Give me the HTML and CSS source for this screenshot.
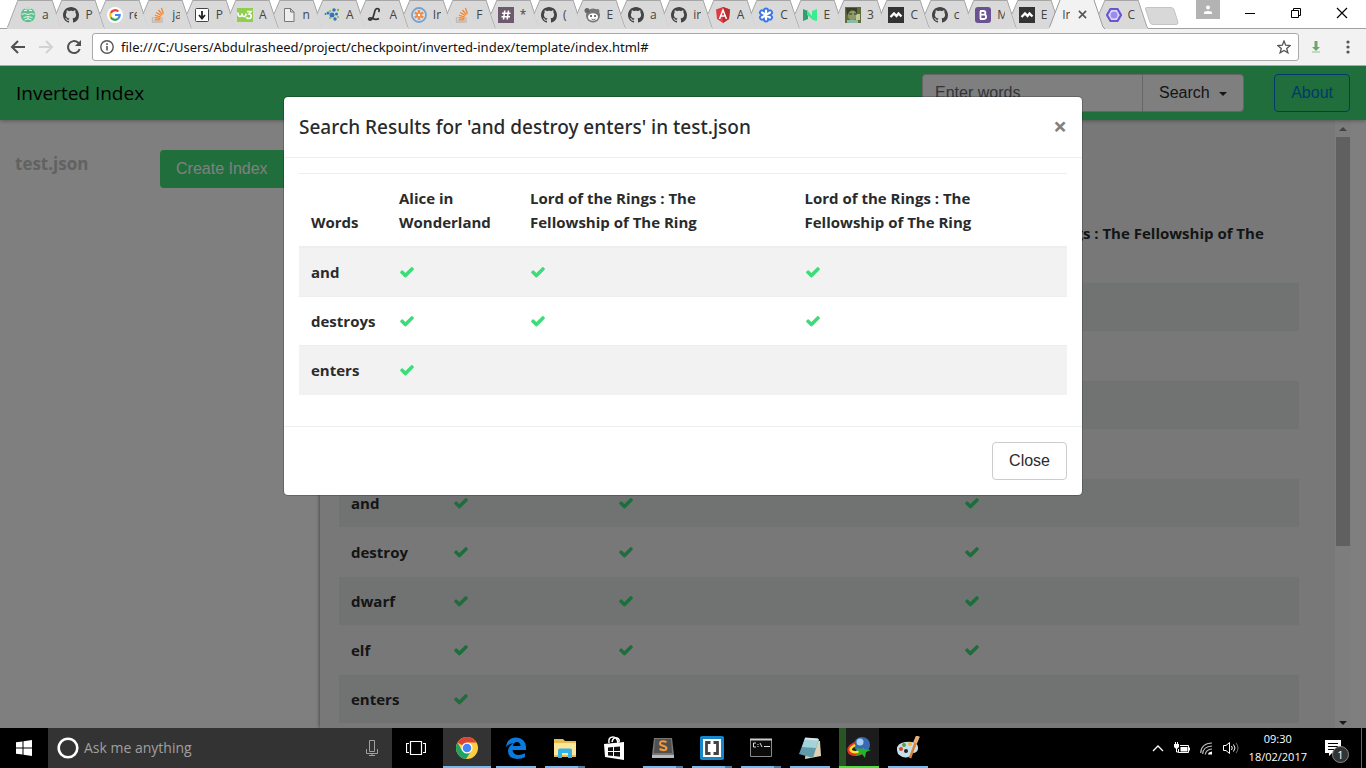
FILE: index.html
```html
<!DOCTYPE html>
<html lang="en">
<head>
<meta charset="utf-8">
<title>Inverted Index</title>
<link rel="stylesheet" href="styles.css">
</head>
<body>
<svg class="defs" aria-hidden="true">
  <symbol id="shape" viewBox="0 0 56 29"><path d="M12 0 6 14l5 15h44L45 0z" fill="#d9d9d9"/><path d="M12 0 6 14M45 0l9 27 2 2M12 .5h33" fill="none" stroke="#a6a6a6"/></symbol>
  <symbol id="shape-first" viewBox="0 0 56 29"><path d="M11 0 0 29h55L45 0z" fill="#d9d9d9"/><path d="M-1 29 1 26 11 0M45 0l9 27 2 2M11 .5h34" fill="none" stroke="#a6a6a6"/></symbol>
  <symbol id="shape-active" viewBox="0 0 56 29"><path d="M-1 29 1 26 11 0h34l9 27 2 2z" fill="#f2f2f2"/><path d="M-1 29 1 26 11 0M45 0l9 27 2 2" fill="none" stroke="#999"/></symbol>
  <symbol id="github" viewBox="0 0 16 16"><path fill="#444" d="M8 0C3.58 0 0 3.58 0 8c0 3.54 2.29 6.53 5.47 7.59.4.07.55-.17.55-.38 0-.19-.01-.82-.01-1.49-2.01.37-2.53-.49-2.69-.94-.09-.23-.48-.94-.82-1.13-.28-.15-.68-.52-.01-.53.63-.01 1.08.58 1.23.82.72 1.21 1.87.87 2.33.66.07-.52.28-.87.51-1.07-1.78-.2-3.64-.89-3.64-3.95 0-.87.31-1.59.82-2.15-.08-.2-.36-1.02.08-2.12 0 0 .67-.21 2.2.82.64-.18 1.32-.27 2-.27s1.36.09 2 .27c1.53-1.04 2.2-.82 2.2-.82.44 1.1.16 1.92.08 2.12.51.56.82 1.27.82 2.15 0 3.07-1.87 3.75-3.65 3.95.29.25.54.73.54 1.48 0 1.07-.01 1.93-.01 2.2 0 .21.15.46.55.38A8.013 8.013 0 0016 8c0-4.42-3.58-8-8-8z"/></symbol>
  <symbol id="stack" viewBox="0 0 16 16"><path d="M2.500 10v5h9.500v-5" fill="none" stroke="#bbb" stroke-width="1.300"/><path d="M4.500 12.800h6M4.500 10.600l6 .8M5 8.200l5.800 1.800M6.200 5.400l5.200 3.200M8.400 3l4 4.600M11.400 1l2 5.800" stroke="#f48024" stroke-width="1.200"/></symbol>
  <symbol id="peaks" viewBox="0 0 16 16"><path fill="#333" d="M0 0h16v16H0z"/><path d="m2.500 10 3.500-3.500 2.500 2.500 2-2.500 3 3" fill="none" stroke="#fff" stroke-width="2.400"/></symbol>
  <symbol id="check" viewBox="0 0 1792 1792"><path fill="#3ddc78" d="M1671 566q0 40-28 68l-724 724-136 136q-28 28-68 28t-68-28l-136-136-362-362q-28-28-28-68t28-68l136-136q28-28 68-28t68 28l294 295 656-657q28-28 68-28t68 28l136 136q28 28 28 68z"/></symbol>
</svg>

<header class="chrome">
  <div class="strip">
    <div class="tabs">
      <button class="tab"><svg class="shape"><use href="#shape-first"/></svg><svg class="fav" viewBox="0 0 16 16"><circle cx="8" cy="8" r="7.300" fill="#5fc08d"/><path d="M4 3.500h3M9 3.500h3M1.500 7.500q3-2 6.500 0 3.500-2 6.500 0M5 1.800h6M3.500 10.500q4.500-2 9 0M4.500 13q3.500-2.500 7 0M8 9.500v3" fill="none" stroke="#e3f3ea"/></svg><span>a</span></button>
      <button class="tab"><svg class="shape"><use href="#shape"/></svg><svg class="fav"><use href="#github"/></svg><span>P</span></button>
      <button class="tab"><svg class="shape"><use href="#shape"/></svg><svg class="fav" viewBox="0 0 16 16"><circle cx="8" cy="8" r="8" fill="#fff"/><g fill="none" stroke-width="2.200"><path d="M11.300 4.500A4.700 4.700 0 0 0 3.800 6" stroke="#ea4335"/><path d="M3.800 6a4.700 4.700 0 0 0 0 4.200" stroke="#fbbc05"/><path d="M3.800 10.200a4.700 4.700 0 0 0 7.300 1.400" stroke="#34a853"/><path d="M11.100 11.600A4.700 4.700 0 0 0 12.700 8H8" stroke="#4285f4"/></g></svg><span>re</span></button>
      <button class="tab"><svg class="shape"><use href="#shape"/></svg><svg class="fav"><use href="#stack"/></svg><span>ja</span></button>
      <button class="tab"><svg class="shape"><use href="#shape"/></svg><svg class="fav" viewBox="0 0 16 16"><rect x="1.500" y="1.500" width="13" height="13" rx="1" fill="#fff" stroke="#444"/><path d="M8 4v7M5 8l3 3.500L11 8" fill="none" stroke="#222" stroke-width="1.800"/></svg><span>P</span></button>
      <button class="tab"><svg class="shape"><use href="#shape"/></svg><svg class="fav" viewBox="0 0 16 16"><path fill="#8fce4f" d="M0 1h16v14H0z"/><path d="M1 5.500q0 4 2 4t2-3q0 3 2 3t2-3M10 4.500h4L12 7c3 0 3 4.500 0 4.500-1.500 0-2.500-.8-2.500-1.500" fill="none" stroke="#fff" stroke-width="1.600"/></svg><span>A</span></button>
      <button class="tab"><svg class="shape"><use href="#shape"/></svg><svg class="fav" viewBox="0 0 16 16"><path d="M3.500 1.500h6l3.500 3.500v9.500H3.500zM9.500 1.500V5H13" fill="#eee" stroke="#777"/></svg><span>n</span></button>
      <button class="tab"><svg class="shape"><use href="#shape"/></svg><svg class="fav" viewBox="0 0 16 16"><g fill="#3277b5"><circle cx="8" cy="8" r="2.500"/><circle cx="10" cy="3" r="1.800"/><circle cx="4" cy="6" r="1.500"/><circle cx="12.500" cy="7" r="1.500"/><circle cx="11" cy="12" r="1.700"/><circle cx="1.500" cy="7" r="1"/></g><g fill="#82b83c"><circle cx="6" cy="11" r="1"/><circle cx="14" cy="3" r="1.200"/><circle cx="6" cy="4" r="1"/><circle cx="14" cy="10" r="1"/></g></svg><span>A</span></button>
      <button class="tab"><svg class="shape"><use href="#shape"/></svg><svg class="fav" viewBox="0 0 16 16"><path d="M11.500 5c2.500-3-2-5-3.500-1.500C7 6.500 7 10 4.500 12.500c-2 1.500-4-.5-2-1.500 2.500-1 5 3.500 9.500.5" fill="none" stroke="#333" stroke-width="1.700"/></svg><span>A</span></button>
      <button class="tab"><svg class="shape"><use href="#shape"/></svg><svg class="fav" viewBox="0 0 16 16"><circle cx="8" cy="8" r="7" fill="#d7e3ec" stroke="#72a4cf" stroke-width="1.800"/><g stroke="#f08a45" stroke-width="2.400"><path d="M8 3v10M3.700 5.500l8.600 5M3.700 10.500l8.600-5"/></g><circle cx="8" cy="8" r="1.200" fill="#fff"/></svg><span>In</span></button>
      <button class="tab"><svg class="shape"><use href="#shape"/></svg><svg class="fav"><use href="#stack"/></svg><span>F</span></button>
      <button class="tab"><svg class="shape"><use href="#shape"/></svg><svg class="fav" viewBox="0 0 16 16"><path fill="#6e5a6e" d="M0 0h16v16H0z"/><path d="M6.800 3.500 5.500 12.500M10.500 3.500 9.200 12.500M4 6.200h8.500M3.500 9.800H12" stroke="#fff" stroke-width="1.600"/></svg><span>*</span></button>
      <button class="tab"><svg class="shape"><use href="#shape"/></svg><svg class="fav"><use href="#github"/></svg><span>(</span></button>
      <button class="tab"><svg class="shape"><use href="#shape"/></svg><svg class="fav" viewBox="0 0 16 16"><circle cx="9" cy="8.500" r="7" fill="#777"/><circle cx="3" cy="3.500" r="2.500" fill="#666"/><circle cx="13.500" cy="4" r="2" fill="#777"/><ellipse cx="9" cy="10" rx="5" ry="3.800" fill="#fff"/><path d="M7.500 12q2 1.500 4 0" fill="none" stroke="#666"/><circle cx="7" cy="9" r="1" fill="#444"/><circle cx="11" cy="9" r="1" fill="#444"/></svg><span>E</span></button>
      <button class="tab"><svg class="shape"><use href="#shape"/></svg><svg class="fav"><use href="#github"/></svg><span>a</span></button>
      <button class="tab"><svg class="shape"><use href="#shape"/></svg><svg class="fav"><use href="#github"/></svg><span>in</span></button>
      <button class="tab"><svg class="shape"><use href="#shape"/></svg><svg class="fav" viewBox="0 0 16 16"><path fill="#dd3b45" d="m8 0 7 2.500-1 9.500-6 4-6-4-1-9.500z"/><path fill="#b52e31" d="m8 0 7 2.500-1 9.500-6 4z"/><path d="m4.500 12 3.500-9 3.500 9M6 9h4" fill="none" stroke="#fff" stroke-width="1.500"/></svg><span>A</span></button>
      <button class="tab"><svg class="shape"><use href="#shape"/></svg><svg class="fav" viewBox="0 0 16 16"><g stroke="#3b78e7" stroke-width="6" stroke-linecap="round"><path d="M8 3.500v9M4 5.500l8 5M4 10.500l8-5"/></g><g stroke="#fff" stroke-width="2.200" stroke-linecap="round"><path d="M8 3.500v9M4 5.500l8 5M4 10.500l8-5"/></g></svg><span>C</span></button>
      <button class="tab"><svg class="shape"><use href="#shape"/></svg><svg class="fav" viewBox="0 0 16 16"><path fill="#32a06b" d="m1 2 5 2v8l-5 2z"/><path fill="#3dea93" d="m5 3 5 6V4l5-2v12l-4-1-6-5z"/></svg><span>E</span></button>
      <button class="tab"><svg class="shape"><use href="#shape"/></svg><svg class="fav" viewBox="0 0 16 16"><path fill="#5f6b3b" d="M0 0h16v16H0z"/><path fill="#373f24" d="M1 1h11v5L2 8z"/><ellipse cx="7.500" cy="8.500" rx="4.500" ry="5" fill="#8d9a67"/><path fill="#c2c890" d="M11 7h4v6h-4z"/><path d="M4 7h3M9 7h3" stroke="#333"/><path fill="#8dbaa4" d="M2 13h11v3H2z"/></svg><span>3</span></button>
      <button class="tab"><svg class="shape"><use href="#shape"/></svg><svg class="fav"><use href="#peaks"/></svg><span>C</span></button>
      <button class="tab"><svg class="shape"><use href="#shape"/></svg><svg class="fav"><use href="#github"/></svg><span>c</span></button>
      <button class="tab"><svg class="shape"><use href="#shape"/></svg><svg class="fav" viewBox="0 0 16 16"><rect width="16" height="16" rx="3" fill="#6a5192"/><path d="M5.500 4v8M5 4h3.500c2.500 0 2.500 3.700 0 3.700H5.500h3.500c2.800 0 2.800 4.300 0 4.300H5" fill="none" stroke="#fff" stroke-width="1.800"/></svg><span>M</span></button>
      <button class="tab"><svg class="shape"><use href="#shape"/></svg><svg class="fav"><use href="#peaks"/></svg><span>E</span></button>
      <button class="tab active"><svg class="shape"><use href="#shape-active"/></svg><span>In</span><svg class="tab-x" viewBox="0 0 10 10"><path d="m1 1 8 8M9 1 1 9" stroke="#555" stroke-width="1.800"/></svg></button>
      <button class="tab"><svg class="shape"><use href="#shape"/></svg><svg class="fav" viewBox="0 0 16 16"><path d="m4.500 2h7L15 8l-3.500 6h-7L1 8z" fill="#ddd9f5" stroke="#6b54d3" stroke-width="2.200"/><circle cx="8" cy="8" r="3.500" fill="#958df0"/></svg><span>C</span></button>
    </div>
    <div class="window-tools">
      <button class="new-tab" aria-label="New tab"><svg width="36" height="18" viewBox="0 0 36 18"><path d="M3 .5h24q2 0 3 2l4 13q0 2-2 2H9q-2 0-3-2L1.500 2Q1 .5 3 .5z" fill="#d8d8d8" stroke="#c4c4c4"/></svg></button>
      <button class="person" aria-label="Profile"><svg width="10" height="10" viewBox="0 0 10 10"><circle cx="5" cy="2.500" r="2" fill="#fff"/><path d="M1 9V7.500Q1 6 5 6t4 1.500V9z" fill="#fff"/></svg></button>
      <button class="win" aria-label="Minimize"><svg width="12" height="12" viewBox="0 0 12 12"><path d="M1 6.500h10" stroke="#000"/></svg></button>
      <button class="win" aria-label="Restore"><svg width="12" height="12" viewBox="0 0 12 12"><path d="M1.500 3.500h7v7h-7zM3.500 3V1.500h7v7H9" fill="none" stroke="#000"/></svg></button>
      <button class="win" aria-label="Close window"><svg width="12" height="12" viewBox="0 0 12 12"><path d="m1 1 10 10M11 1 1 11" stroke="#000" stroke-width="1.200"/></svg></button>
    </div>
  </div>
  <div class="toolbar">
    <button aria-label="Back"><svg width="16" height="16" viewBox="0 0 16 16"><path d="M15 8H2.500M8 2 2 8l6 6" fill="none" stroke="#505050" stroke-width="2"/></svg></button>
    <button aria-label="Forward"><svg width="16" height="16" viewBox="0 0 16 16"><path d="M1 8h12.500M8 2l6 6-6 6" fill="none" stroke="#d2d2d2" stroke-width="2"/></svg></button>
    <button aria-label="Reload"><svg width="16" height="16" viewBox="0 0 16 16"><path d="M13.700 10A6 6 0 1 1 12 3.600l1.500 1.500" fill="none" stroke="#505050" stroke-width="2"/><path d="M15 1v6H9z" fill="#505050"/></svg></button>
    <div class="omnibox">
      <svg width="14" height="14" viewBox="0 0 14 14"><circle cx="7" cy="7" r="6.200" fill="none" stroke="#555" stroke-width="1.400"/><path d="M7 6v4.500M7 3.300V5" stroke="#555" stroke-width="1.600"/></svg>
      <input class="url" aria-label="Address" value="file:///C:/Users/Abdulrasheed/project/checkpoint/inverted-index/template/index.html#">
      <button aria-label="Bookmark"><svg width="14" height="14" viewBox="0 0 14 14"><path d="m7 1 1.700 4.200 4.500.3-3.500 2.900 1.200 4.400L7 10.400l-3.900 2.400 1.200-4.400L.8 5.500l4.500-.3z" fill="none" stroke="#555" stroke-width="1.300"/></svg></button>
    </div>
    <button class="download" aria-label="Download"><svg width="10" height="14" viewBox="0 0 10 14"><path d="M3.500 1h3v6H9L5 11 1 7h2.500z" fill="#6da56d"/><path d="M1 12h8" stroke="#94bd94"/></svg></button>
    <button class="menu" aria-label="Menu"><svg width="4" height="14" viewBox="0 0 4 14"><g fill="#555"><circle cx="2" cy="2" r="1.600"/><circle cx="2" cy="7" r="1.600"/><circle cx="2" cy="12" r="1.600"/></g></svg></button>
  </div>
</header>

<div class="page">
  <nav class="navbar">
    <a class="brand" href="#">Inverted Index</a>
    <div class="search-group">
      <input class="words" aria-label="Enter words" placeholder="Enter words">
      <button class="search-btn">Search <i class="caret"></i></button>
    </div>
    <a class="about" href="#">About</a>
  </nav>
  <div class="columns">
    <aside class="sidebar">
      <strong>test.json</strong>
      <button class="create">Create Index</button>
    </aside>
    <main class="results">
      <table class="grid index-grid">
        <colgroup><col class="w1"><col class="w2"><col class="w3"><col></colgroup>
        <thead><tr><th></th><th></th><th></th><th>Lord of the Rings : The Fellowship of The Ring</th></tr></thead>
        <tbody>
          <tr><th></th><td></td><td></td><td></td></tr>
          <tr><th></th><td></td><td></td><td></td></tr>
          <tr><th></th><td></td><td></td><td></td></tr>
          <tr><th></th><td></td><td></td><td></td></tr>
          <tr><th>and</th><td><svg class="check"><use href="#check"/></svg></td><td><svg class="check"><use href="#check"/></svg></td><td><svg class="check"><use href="#check"/></svg></td></tr>
          <tr><th>destroy</th><td><svg class="check"><use href="#check"/></svg></td><td><svg class="check"><use href="#check"/></svg></td><td><svg class="check"><use href="#check"/></svg></td></tr>
          <tr><th>dwarf</th><td><svg class="check"><use href="#check"/></svg></td><td><svg class="check"><use href="#check"/></svg></td><td><svg class="check"><use href="#check"/></svg></td></tr>
          <tr><th>elf</th><td><svg class="check"><use href="#check"/></svg></td><td><svg class="check"><use href="#check"/></svg></td><td><svg class="check"><use href="#check"/></svg></td></tr>
          <tr><th>enters</th><td><svg class="check"><use href="#check"/></svg></td><td></td><td></td></tr>
        </tbody>
      </table>
    </main>
    <div class="scrollbar" aria-hidden="true">
      <i class="up"></i><div class="thumb"></div><div class="rest"></div><i class="down"></i>
    </div>
  </div>

  <div class="backdrop">
    <section class="modal" role="dialog" aria-labelledby="modal-title">
      <header class="modal-head"><h5 id="modal-title">Search Results for 'and destroy enters' in test.json</h5><button class="close" aria-label="Dismiss">×</button></header>
      <div class="modal-body">
        <table class="grid modal-grid">
          <colgroup><col class="m1"><col class="m2"><col><col></colgroup>
          <thead><tr><th>Words</th><th>Alice in Wonderland</th><th>Lord of the Rings : The Fellowship of The Ring</th><th>Lord of the Rings : The Fellowship of The Ring</th></tr></thead>
          <tbody>
            <tr><th>and</th><td><svg class="check"><use href="#check"/></svg></td><td><svg class="check"><use href="#check"/></svg></td><td><svg class="check"><use href="#check"/></svg></td></tr>
            <tr><th>destroys</th><td><svg class="check"><use href="#check"/></svg></td><td><svg class="check"><use href="#check"/></svg></td><td><svg class="check"><use href="#check"/></svg></td></tr>
            <tr><th>enters</th><td><svg class="check"><use href="#check"/></svg></td><td></td><td></td></tr>
          </tbody>
        </table>
      </div>
      <footer class="modal-foot"><button class="close-btn">Close</button></footer>
    </section>
  </div>
</div>

<footer class="taskbar">
  <button class="start" aria-label="Start"><svg width="16" height="16" viewBox="0 0 16 16"><path fill="#fff" d="M0 2.300 6.500 1.400v6.100H0zM7.500 1.200 16 0v7.500H7.500zM0 8.500h6.500v6.100L0 13.700zM7.500 8.500H16V16l-8.500-1.200z"/></svg></button>
  <div class="cortana">
    <svg width="22" height="22" viewBox="0 0 22 22"><circle cx="11" cy="11" r="9.300" fill="none" stroke="#fff" stroke-width="2.600"/></svg>
    <input aria-label="Ask me anything" placeholder="Ask me anything">
    <svg width="12" height="16" viewBox="0 0 12 16"><path d="M3.500.5h5v11h-5zM.5 9v4.500h11V9M6 13.500v2M3 15.500h6" fill="none" stroke="#a0a0a0"/></svg>
  </div>
  <button class="task-view" aria-label="Task view"><svg width="20" height="14" viewBox="0 0 20 14"><path d="M4.500.5h11v13h-11zM3 2.500H.5v9H3M17 2.500h2.500v9H17" fill="none" stroke="#fff" stroke-width="1.200"/></svg></button>
  <div class="apps">
    <button class="app current" aria-label="Chrome"><svg viewBox="0 0 24 24"><circle cx="12" cy="12" r="11" fill="#ffcd40"/><path d="M12 12 2.500 6.500A11 11 0 0 1 21.500 6.500H12z" fill="#db4437"/><path d="M2.500 6.500A11 11 0 0 0 11 23l5.500-8.500L12 12 7 14.500z" fill="#1da462"/><circle cx="12" cy="12" r="5.500" fill="#fff"/><circle cx="12" cy="12" r="4.300" fill="#4285f4"/></svg></button>
    <button class="app running" aria-label="Edge"><svg viewBox="0 0 24 24"><path fill="#0a7bdc" d="M2 11Q3 2 12 1.500q9 .5 10 9V14H8.500q.8 5 6 5 3.500 0 6.500-1.800V21q-3 2-8 2Q4 22.500 4 15q.3-5 5.500-8Q5 7.500 2 11zM8.800 10h7.700q-.2-4-3.700-4-3.300.3-4 4z"/></svg></button>
    <button class="app running multi" aria-label="Explorer"><svg viewBox="0 0 24 24"><path fill="#e8bd50" d="M1 3h9l2 2h11v16H1z"/><path fill="#ffe79a" d="M1 7h22v12H1z"/><path fill="#32b1ea" d="M5 22v-8q0-1.500 2-1.500h10q2 0 2 1.500v8h-4v-5H9v5z"/></svg></button>
    <button class="app" aria-label="Store"><svg viewBox="0 0 24 24"><path d="M7 7q-1-6 4-6 4 0 5 6M10 6q1-5 5-4 3 1 2 4" fill="none" stroke="#fff" stroke-width="1.500"/><path fill="#fff" d="m2 8 20-2v18L3 21z"/><path fill="#111" d="m6 11.500 5-.5v4H6zM12 11l6-.6V15h-6zM6 16h5v4l-5-.5zM12 16h6v4.800l-6-.7z"/></svg></button>
    <button class="app running multi" aria-label="Sublime Text"><svg viewBox="0 0 24 24"><path d="M3 2h18l2 17v3H1v-3z" fill="#777"/><path d="M4 3h16l1 14H3z" fill="#505050"/><path d="M1 19h22v3H1z" fill="#bbb"/><path d="M15.500 6Q9 4 9 7.500q0 1.700 3 2.300 3.500 1 3.500 2.700Q15 15.500 8.500 13" fill="none" stroke="#f79a35" stroke-width="2"/></svg></button>
    <button class="app running multi" aria-label="Brackets"><svg viewBox="0 0 24 24"><rect width="24" height="24" rx="2" fill="#1685c9"/><path fill="#fff" d="M3 3h18v18H3z"/><path d="M10.500 6.500h-4v11h4M13.500 6.500h4v11h-4" fill="none" stroke="#444" stroke-width="2.800"/></svg></button>
    <button class="app running multi" aria-label="Command Prompt"><svg viewBox="0 0 24 24"><path fill="#0b0b0b" stroke="#8b8b8b" d="M1.500 3.500h21v17h-21z"/><path d="M1 3.500h22" stroke="#ccc" stroke-width="2"/><path d="M7 7H4.500v4H7M9 8v1m0 1v1M11 7l2 4M15 10.500h6" fill="none" stroke="#ddd"/></svg></button>
    <button class="app running" aria-label="Notepad"><svg viewBox="0 0 24 24"><path fill="#ddd3b4" d="m9 3 13 2 1 15-16 3z"/><path fill="#5f9cab" d="m7 2 14 1-6 19-14-4z"/><path fill="#a5d3da" d="m7 2 14 1-3 9-14-1z"/><path d="m7 2.500 13 1" stroke="#dce5e5" stroke-width="2"/></svg></button>
    <button class="app idm" aria-label="Download Manager"><svg viewBox="0 0 24 24"><circle cx="15" cy="9" r="8" fill="#3769b5"/><circle cx="13" cy="6" r="3.500" fill="#a8cff0"/><g fill="none"><path d="M8 7Q-1 12 3 17q6 4 15-2" stroke="#e53422" stroke-width="3"/><path d="M8 9Q1 13 5 15.500q5 2 12-2" stroke="#ffe32e" stroke-width="2.500"/></g><path fill="#25b52a" d="m9 12 15 2-5 2-1 6-3-4-7 2 4-4z"/></svg></button>
    <button class="app running" aria-label="Paint"><svg viewBox="0 0 24 24"><path fill="#c6dfeb" d="M2 18Q-2 8 9 6q14-2 13 7-1 4-5 4-2 0-3 3-5 4-12-2z"/><circle cx="5" cy="13" r="2" fill="#d84634"/><circle cx="8" cy="9" r="2" fill="#5ca33b"/><circle cx="14" cy="8" r="2" fill="#efb835"/><circle cx="10" cy="15" r="2" fill="#222"/><path d="m21 3-7 19" stroke="#d98232" stroke-width="2.500"/><path d="m22 0-3 7" stroke="#e4b07c" stroke-width="4"/></svg></button>
  </div>
  <div class="tray">
    <svg width="12" height="8" viewBox="0 0 12 8"><path d="m1 7 5-5 5 5" fill="none" stroke="#fff" stroke-width="1.300"/></svg>
    <svg width="16" height="12" viewBox="0 0 16 12"><path d="M6 3.500h8.500v7h-10V7M15.500 5.500v3" fill="none" stroke="#fff"/><path fill="#fff" d="M6.500 5h7v4.500h-7zM0 2h5v3L3.500 6.500h-2L0 5z"/><path d="M1.500 0v2M3.500 0v2M2.500 6v4h2" fill="none" stroke="#fff"/></svg>
    <svg width="13" height="13" viewBox="0 0 13 13"><g fill="none" stroke="#bbb" stroke-width="1.200"><path d="M.7 11Q1 1.500 12 1"/><path d="M2.700 12Q3 4.500 12 4"/><path d="M5.300 12.500Q6 7.500 12 7"/></g><path d="M8 12.500q0-2.500 4-3v3z" fill="#fff"/></svg>
    <svg width="16" height="14" viewBox="0 0 16 14"><path d="M.5 4.500H3l3.500-3v11L3 9.500H.5zM8.500 5q1.500 2 0 4M10.500 3.500q3 3.500 0 7" fill="none" stroke="#fff"/><path d="M13 2q4 5 0 10" fill="none" stroke="#777"/></svg>
    <div class="clock"><time>09:30</time><time>18/02/2017</time></div>
    <button class="notify" aria-label="Notifications"><svg width="16" height="16" viewBox="0 0 16 16"><path fill="#fff" d="M0 0h16v13H7l-3 3v-3H0z"/><path d="M3 3.500h10M3 6.500h10M3 9.500h7" stroke="#000"/></svg><span class="badge">1</span></button>
    <button class="desktop" aria-label="Show desktop"></button>
  </div>
</footer>
</body>
</html>
```
FILE: styles.css
```css
* { box-sizing: border-box; }
body {
  margin: 0;
  height: 100vh;
  display: flex;
  flex-direction: column;
  overflow: hidden;
  font: 15px/24px "Open Sans", "Noto Sans", sans-serif;
  color: #292b2c;
}
button { border: 0; padding: 0; background: none; font: inherit; color: inherit; }
input { border: 0; padding: 0; outline: 0; background: none; font: inherit; color: inherit; min-width: 0; }
a { text-decoration: none; }
svg { display: block; flex: none; }
.defs { position: absolute; width: 0; height: 0; }

/* Browser frame */
.chrome { flex: none; background: #fff; border-bottom: 1px solid #a9a9a9; }
.strip { display: flex; height: 29px; border-bottom: 1px solid #a0a0a0; }
.tabs { flex: 1; display: flex; min-width: 0; padding-left: 7px; }
.tab {
  position: relative;
  flex: 1;
  min-width: 0;
  height: 29px;
  display: flex;
  align-items: center;
  gap: 6px;
  padding-left: 13px;
  font-size: 12px;
  line-height: 16px;
  color: #444;
}
.shape { position: absolute; left: 0; top: 0; width: 56px; height: 29px; overflow: visible; }
.fav { position: relative; width: 16px; height: 16px; }
.tab span {
  position: relative;
  flex: none;
  width: 8px;
  overflow: hidden;
  white-space: nowrap;
  text-align: left;
}
.active { z-index: 1; gap: 8px; }
.tab-x { position: relative; width: 9px; height: 9px; }
.window-tools { flex: none; display: flex; width: 230px; padding-left: 8px; }
.new-tab { width: 36px; padding-top: 7px; align-self: flex-start; }
.person {
  width: 24px;
  height: 19px;
  margin: 0 7px 0 16px;
  display: flex;
  justify-content: center;
  align-items: center;
  background: #b3b3b3;
}
.win { width: 46px; height: 26px; display: flex; justify-content: center; align-items: center; }
.toolbar {
  display: flex;
  align-items: center;
  gap: 12px;
  height: 36px;
  padding: 0 16px 0 10px;
  background: #f2f2f2;
}
.omnibox {
  flex: 1;
  display: flex;
  align-items: center;
  gap: 7px;
  height: 28px;
  margin-left: -2px;
  padding: 0 7px;
  background: #fff;
  border: 1px solid #a9a9a9;
  border-radius: 3px;
}
.url { flex: 1; font-family: "Noto Sans", sans-serif; font-size: 13px; line-height: 20px; color: #111; }
.menu { margin-left: 13px; }

/* Application */
.page { position: relative; flex: 1; min-height: 0; display: flex; flex-direction: column; overflow: hidden; background: #fff; }
.navbar {
  position: relative;
  flex: none;
  display: flex;
  align-items: center;
  height: 54px;
  padding: 0 16px;
  background: #40dc76;
  box-shadow: 0 1px 4px rgba(0, 0, 0, .3);
  font: 16px/24px "Liberation Sans", sans-serif;
}
.brand { flex: 1; font: 19px/30px "Open Sans", sans-serif; color: #000; }
.search-group { display: flex; margin-right: 30px; }
.words, .search-btn { height: 38px; background: #fff; border: 1px solid #ccc; }
.words { width: 220px; padding: 0 12px; border-radius: 4px 0 0 4px; border-right: 0; }
.words::placeholder { color: #636c72; opacity: 1; }
.search-btn { padding: 0 16px; border-radius: 0 4px 4px 0; }
.caret { display: inline-block; margin-left: 5px; vertical-align: middle; border: 4px solid transparent; border-top-color: #292b2c; border-bottom: 0; }
.about { height: 38px; padding: 6px 16px; border: 1px solid #0275d8; border-radius: 4px; color: #0275d8; }
.columns { flex: 1; min-height: 0; display: flex; padding-right: 15px; }
.sidebar { flex: none; width: 320px; padding: 30px 15px; display: flex; justify-content: space-between; align-items: flex-start; }
.sidebar strong { font-size: 17px; line-height: 28px; color: #c4c4c4; }
.create {
  width: 145px;
  height: 38px;
  padding: 0 16px;
  border-radius: 4px;
  background: #40dc76;
  color: #fff;
  text-align: left;
  font: 16px/24px "Liberation Sans", sans-serif;
}
.results { flex: 1; min-width: 0; padding: 88px 36px 0 19px; overflow: hidden; background: #f0f1f1; box-shadow: 0 0 4px rgba(0, 0, 0, .6); }
.scrollbar { flex: none; width: 16px; display: flex; flex-direction: column; align-items: center; background: #fafafa; }
.up, .down { flex: none; width: 0; height: 0; border: 4px solid transparent; }
.up { border-bottom-color: #888; border-top: 0; margin: 7px 0 6px; }
.down { border-top-color: #333; border-bottom: 0; margin-bottom: 3px; }
.thumb { flex: 409; width: 14px; background: #c1c1c1; }
.rest { flex: 175; }

.grid { width: 100%; table-layout: fixed; border-collapse: collapse; }
.grid th, .grid td { height: 49px; padding: 12px; text-align: left; vertical-align: top; border-top: 1px solid #eceeef; }
.grid thead th { vertical-align: bottom; border-bottom: 2px solid #eceeef; }
.grid th { font-weight: 700; }
.grid tbody tr:nth-child(odd) { background: rgba(0, 0, 0, .05); }
.modal-grid thead th:nth-child(n+3) { padding-right: 48px; }
.check { width: 16px; height: 16px; margin: 4px 0; }
.w1 { width: 102px; }
.w2 { width: 165px; }
.w3 { width: 346px; }
.m1 { width: 88px; }
.m2 { width: 131px; }

/* Dialog */
.backdrop { position: absolute; inset: 0; display: flex; justify-content: center; align-items: flex-start; padding-top: 30px; background: rgba(0, 0, 0, .5); }
.modal { width: 100%; max-width: 800px; background: #fff; background-clip: padding-box; border: 1px solid rgba(0, 0, 0, .2); border-radius: 5px; }
.modal-head { display: flex; justify-content: space-between; align-items: flex-start; padding: 15px; border-bottom: 1px solid #eceeef; }
.modal-head h5 { margin: 0; font-family: "Noto Sans", sans-serif; font-size: 19px; line-height: 30px; font-weight: 500; }
.close { font-size: 24px; line-height: 28px; font-weight: 700; color: #808080; }
.modal-body { padding: 15px 15px 31px; }
.modal-foot { display: flex; justify-content: flex-end; padding: 15px; border-top: 1px solid #eceeef; }
.close-btn { height: 38px; padding: 0 16px; border: 1px solid #ccc; border-radius: 4px; font: 16px/24px "Liberation Sans", sans-serif; }

/* Desktop taskbar */
.taskbar { flex: none; display: flex; height: 40px; background: #000; color: #fff; }
.start { width: 48px; display: flex; justify-content: center; align-items: center; }
.cortana { width: 344px; display: flex; align-items: center; gap: 5px; padding: 0 14px 0 9px; background: #333; font-size: 14px; }
.cortana input { flex: 1; }
.cortana input::placeholder { color: #a0a0a0; opacity: 1; }
.task-view { width: 51px; padding-right: 3px; display: flex; justify-content: center; align-items: center; }
.apps { flex: 1; display: flex; gap: 9px; }
.app { position: relative; width: 40px; display: flex; justify-content: center; align-items: center; border-bottom: 2px solid transparent; padding-top: 2px; }
.app svg { width: 24px; height: 24px; }
.current { width: 48px; background: #333; border-bottom-color: #76b9ed; margin-right: -4px; }
.running { border-bottom-color: #76b9ed; }
.multi { border-image: linear-gradient(90deg, #76b9ed 80%, #4f7ea5 80%) 2; }
.idm { background: linear-gradient(90deg, #285523 7px, #1c1c1c 7px); border-bottom-color: #4be03c; }
.tray { flex: none; display: flex; align-items: center; gap: 10px; }
.clock { display: flex; flex-direction: column; align-items: center; font-size: 11px; line-height: 18px; }
.notify { position: relative; margin: 0 10px 0 8px; }
.badge { position: absolute; left: 7px; top: 6px; width: 17px; height: 17px; border: 1px solid #888; border-radius: 50%; background: #333; font-size: 11px; line-height: 15px; text-align: center; }
.desktop { width: 5px; height: 40px; border-left: 1px solid #666; }
```
